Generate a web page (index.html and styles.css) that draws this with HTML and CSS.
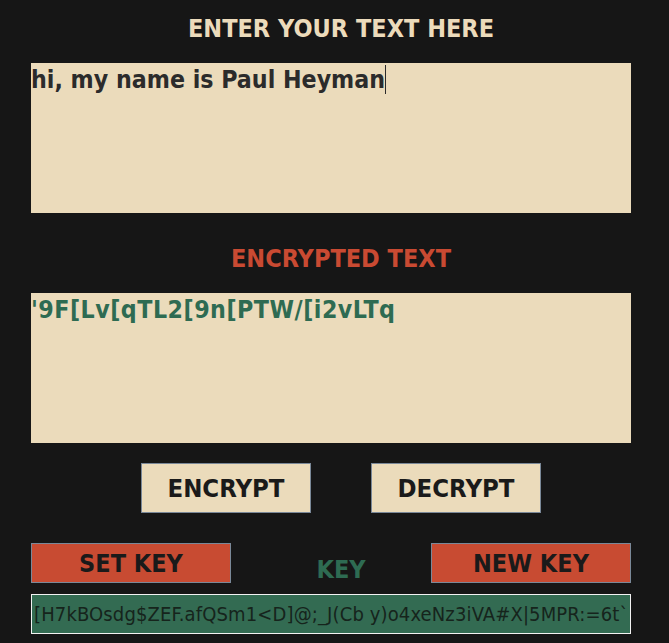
FILE: index.html
```html
<!DOCTYPE html>
<html>
<head>
<meta charset="utf-8">
<link rel="stylesheet" href="styles.css">
</head>
<body>
<div class="app">
  <h1 class="heading heading-input">ENTER YOUR TEXT HERE</h1>
  <div class="box box-input"><span class="text">hi, my name is Paul Heyman</span><span class="caret"></span></div>
  <h2 class="heading heading-output">ENCRYPTED TEXT</h2>
  <div class="box box-output"><span class="text">'9F[Lv[qTL2[9n[PTW/[i2vLTq</span></div>
  <div class="actions">
    <button class="btn btn-light">ENCRYPT</button>
    <button class="btn btn-light">DECRYPT</button>
  </div>
  <div class="keyrow">
    <button class="btn btn-red">SET KEY</button>
    <div class="keylabel">KEY</div>
    <button class="btn btn-red">NEW KEY</button>
  </div>
  <div class="keyfield">[H7kBOsdg$ZEF.afQSm1&lt;D]@;_J(Cb y)o4xeNz3iVA#X|5MPR:=6t`</div>
</div>
</body>
</html>
```
FILE: styles.css
```css
html, body {
  margin: 0;
  padding: 0;
  background: #161616;
}
body {
  font-family: "DejaVu Sans Condensed", "DejaVu Sans", sans-serif;
  font-stretch: condensed;
}
.app {
  width: 620px;
  padding: 14px 0 0 31px;
  display: flex;
  flex-direction: column;
}
.heading {
  margin: 0;
  text-align: center;
  font-weight: bold;
  font-size: 25px;
  line-height: 30px;
}
.heading-input {
  color: #ecdbbb;
}
.heading-output {
  color: #c94a32;
  margin-top: 31px;
}
.box {
  width: 600px;
  height: 150px;
  background: #ebdbbb;
  box-sizing: border-box;
  font-weight: bold;
  font-size: 24.7px;
  line-height: 34px;
  padding: 0;
  display: flex;
  align-items: flex-start;
}
.box-input {
  margin-top: 19px;
  color: #2b2b2b;
}
.box-output {
  margin-top: 19px;
  color: #2e6b52;
  letter-spacing: 0.5px;
}
.caret {
  display: inline-block;
  width: 1px;
  height: 29px;
  margin-top: 2px;
  background: #2b2b2b;
}
.actions {
  display: flex;
  justify-content: center;
  gap: 60px;
  margin-top: 20px;
}
.btn {
  font-family: inherit;
  font-stretch: condensed;
  font-weight: bold;
  font-size: 25.5px;
  border: 1px solid #7a8898;
  padding: 0;
  margin: 0;
  color: #1a1a1a;
  cursor: pointer;
}
.btn-light {
  width: 170px;
  height: 50px;
  background: #ebdbbb;
}
.keyrow {
  display: grid;
  grid-template-columns: 200px 200px 200px;
  margin-top: 30px;
  align-items: start;
}
.btn-red {
  width: 200px;
  height: 40px;
  background: #c84b32;
  font-size: 25px;
}
.keylabel {
  color: #2e6b52;
  font-weight: bold;
  font-size: 25px;
  text-align: center;
  padding: 13px 0 0 20px;
  line-height: 28px;
}
.keyfield {
  margin-top: 10px;
  width: 600px;
  height: 40px;
  box-sizing: border-box;
  border: 1px solid #f2f2f2;
  background: #336b52;
  color: #16241c;
  font-size: 20px;
  letter-spacing: 0.13px;
  line-height: 38px;
  padding-left: 2px;
  white-space: nowrap;
  overflow: hidden;
}
```
